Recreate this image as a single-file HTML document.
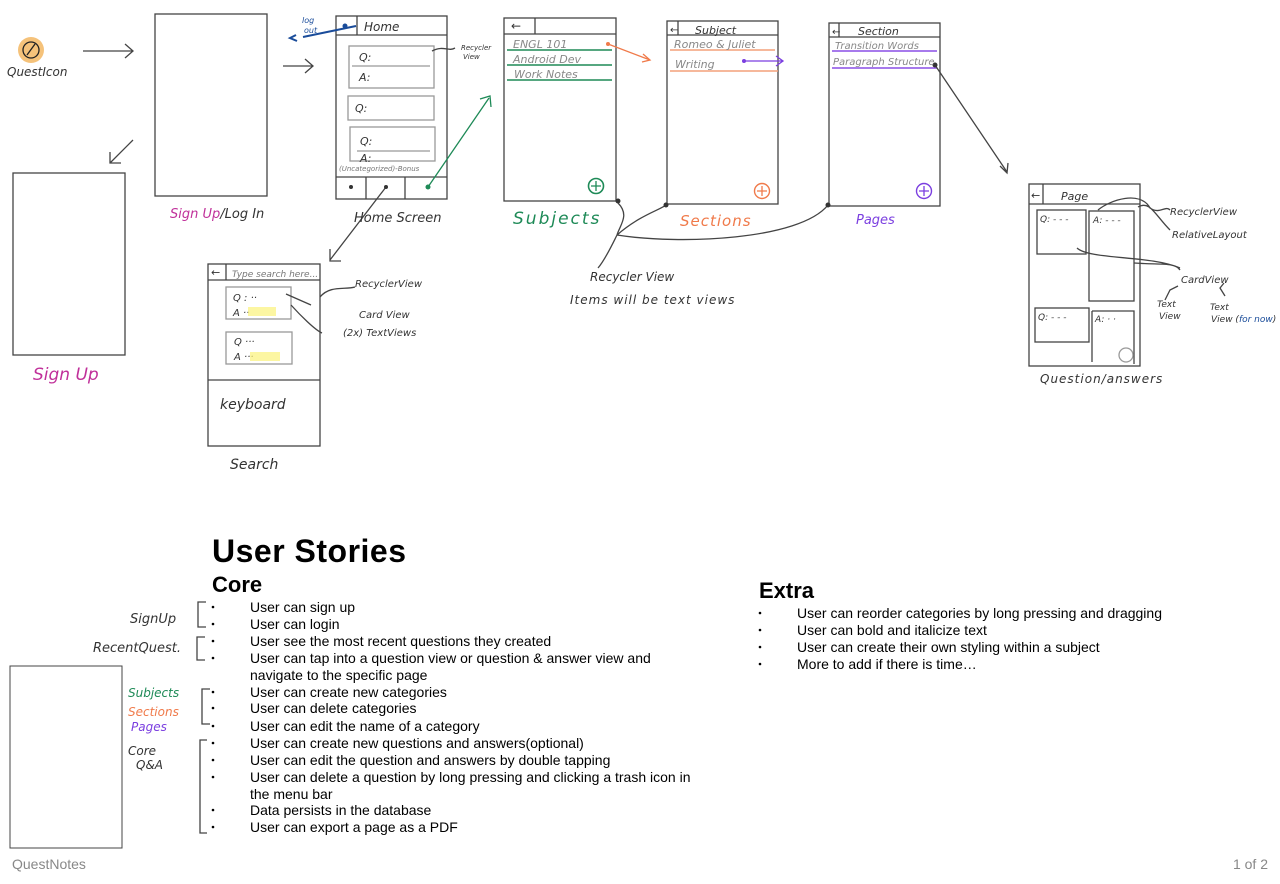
<!DOCTYPE html>
<html><head><meta charset="utf-8"><style>
html,body{margin:0;padding:0;background:#fff;width:1280px;height:884px;overflow:hidden}
svg{display:block}
.h{font-family:"Liberation Sans",sans-serif}
.s{font-family:"DejaVu Sans",sans-serif;font-style:italic}
</style></head><body>
<svg width="1280" height="884" viewBox="0 0 1280 884" xmlns="http://www.w3.org/2000/svg">
<g fill="none" stroke="#444" stroke-width="1.3">
<circle cx="31" cy="50" r="13" fill="#f5c27a" stroke="none"/>
<circle cx="31" cy="50" r="8" stroke="#222"/>
<line x1="27" y1="55" x2="35" y2="44" stroke="#222"/>
<path d="M83 51 H133 M125 44 L133 51 L125 58"/>
<rect x="155" y="14" width="112" height="182"/>
<path d="M283 66 H313 M305 59 L313 66 L305 73"/>
<path d="M133 140 L110 163 M110 152 V163 H121"/>
<rect x="13" y="173" width="112" height="182"/>
<rect x="336" y="16" width="111" height="183"/>
<path d="M336 35 H447 M357 16 V35"/>
<rect x="349" y="46" width="85" height="42" stroke="#999"/><path d="M352 66 H430" stroke="#999"/>
<rect x="348" y="96" width="86" height="24" stroke="#999"/>
<rect x="350" y="127" width="85" height="34" stroke="#999"/><path d="M357 151 H430" stroke="#999"/>
<path d="M336 177 H447 M366 177 V199 M405 177 V199"/>
<path d="M356 26 L303 37" stroke="#1a4c9a" stroke-width="2"/>
<path d="M296 35 L290 38 L297 41" stroke="#1a4c9a" stroke-width="2"/>
<path d="M386 187 L330 260 M330 249 V261 H341"/>
<path d="M428 187 L489 98 M480 99 L490 96 L491 107" stroke="#1e8a57"/>
<path d="M432 51 C444 45 448 52 455 48"/>
<rect x="504" y="18" width="112" height="183"/>
<path d="M504 34 H616 M535 18 V34"/>
<path d="M507 50 H612 M507 65 H612 M507 80 H612" stroke="#1e8a57" stroke-width="1.6"/>
<circle cx="596" cy="186" r="7.5" stroke="#1e8a57" stroke-width="1.6"/><path d="M596 181 V191 M591 186 H601" stroke="#1e8a57"/>
<path d="M608 44 L650 60 M643 54 L650 60 L642 62" stroke="#f07a4a"/>
<rect x="667" y="21" width="111" height="183"/>
<path d="M667 35 H778 M678 21 V35"/>
<path d="M670 50 H775 M670 71 H778" stroke="#f4a07a" stroke-width="1.6"/>
<circle cx="762" cy="191" r="7.5" stroke="#f07a4a" stroke-width="1.4"/><path d="M762 186 V196 M757 191 H767" stroke="#f07a4a"/>
<path d="M744 61 H782 M776 56 L783 61 L776 66" stroke="#7b3fe0"/>
<rect x="829" y="23" width="111" height="183"/>
<path d="M829 37 H940 M839 23 V37"/>
<path d="M832 51 H937 M832 68 H937" stroke="#8a4ee6" stroke-width="1.6"/>
<circle cx="924" cy="191" r="7.5" stroke="#7b3fe0" stroke-width="1.4"/><path d="M924 186 V196 M919 191 H929" stroke="#7b3fe0"/>
<path d="M935 65 L1007 172 M1000 166 L1007 173 L1008 163"/>
<path d="M618 203 C630 215 620 225 617 235 C612 245 605 260 598 268 M617 235 C640 215 660 210 666 205 M617 235 C680 245 800 240 828 205"/>
<rect x="1029" y="184" width="111" height="182"/>
<path d="M1029 204 H1140 M1043 184 V204"/>
<rect x="1037" y="210" width="49" height="44"/>
<rect x="1089" y="211" width="45" height="90"/>
<rect x="1035" y="308" width="54" height="34"/>
<path d="M1092 311 H1134 V364 M1092 311 V362"/>
<circle cx="1126" cy="355" r="7" stroke="#999"/>
<path d="M1098 210 C1110 200 1140 190 1150 208 C1160 215 1165 205 1170 210 M1138 207 C1150 200 1155 215 1170 230"/>
<path d="M1077 248 C1090 260 1150 255 1180 268 M1134 263 C1160 265 1175 262 1180 270"/>
<path d="M1165 300 L1170 290 L1178 286 M1225 296 L1220 288 L1224 283"/>
<rect x="208" y="264" width="112" height="182"/>
<path d="M208 280 H320 M226 264 V280 M208 380 H320"/>
<rect x="226" y="287" width="65" height="32" stroke="#999"/>
<rect x="226" y="332" width="66" height="32" stroke="#999"/>
<path d="M286 294 L311 305 M291 305 C300 315 315 330 322 333 M320 297 C330 285 345 290 355 287"/>
<path d="M206 602 H198 V627 H206 M205 637 H197 V660 H205 M210 689 H202 V724 H210 M207 740 H200 V833 H207"/>
<rect x="10" y="666" width="112" height="182" stroke-width="1"/>
</g>
<g fill="#333">
<circle cx="345" cy="26" r="2.5" fill="#1a4c9a"/><circle cx="351" cy="187" r="2"/><circle cx="386" cy="187" r="2"/><circle cx="428" cy="187" r="2.5" fill="#1e8a57"/>
<circle cx="608" cy="44" r="2" fill="#f07a4a"/><circle cx="744" cy="61" r="2" fill="#7b3fe0"/><circle cx="935" cy="65" r="2.5"/>
<circle cx="618" cy="201" r="2.5"/><circle cx="666" cy="205" r="2.5"/><circle cx="828" cy="205" r="2.5"/>
</g>
<g class="s" font-size="11" fill="#333">
<text x="7" y="76" font-size="12">QuestIcon</text>
<text x="170" y="218" font-size="13" fill="#c0309a">Sign Up<tspan fill="#333">/Log In</tspan></text>
<text x="33" y="380" font-size="17" fill="#c0309a">Sign Up</text>
<text x="364" y="31" font-size="12">Home</text>
<text x="359" y="61">Q:</text><text x="359" y="81">A:</text><text x="355" y="112">Q:</text>
<text x="360" y="145">Q:</text><text x="360" y="162">A:</text>
<text x="339" y="171" font-size="7" fill="#777">(Uncategorized)-Bonus</text>
<text x="354" y="222" font-size="13">Home Screen</text>
<text x="302" y="23" font-size="8" fill="#1a4c9a">log</text><text x="304" y="33" font-size="8" fill="#1a4c9a">out</text>
<text x="461" y="50" font-size="7">Recycler</text><text x="463" y="59" font-size="7">View</text>
<text x="511" y="30" font-size="12">←</text>
<text x="513" y="48" fill="#888">ENGL 101</text><text x="513" y="63" fill="#888">Android Dev</text><text x="514" y="78" fill="#888">Work Notes</text>
<text x="513" y="224" font-size="17" fill="#1e8a57" letter-spacing="2">Subjects</text>
<text x="670" y="33" font-size="10">←</text><text x="695" y="34" font-size="11">Subject</text>
<text x="674" y="48" fill="#888">Romeo &amp; Juliet</text><text x="675" y="68" fill="#888">Writing</text>
<text x="680" y="226" font-size="15" fill="#f07a4a" letter-spacing="1">Sections</text>
<text x="832" y="35" font-size="10">←</text><text x="858" y="35" font-size="11">Section</text>
<text x="835" y="49" fill="#888" font-size="10">Transition Words</text><text x="833" y="65" fill="#888" font-size="10">Paragraph Structure</text>
<text x="856" y="224" font-size="13" fill="#7b3fe0">Pages</text>
<text x="1031" y="199" font-size="11">←</text><text x="1061" y="200" font-size="11">Page</text>
<text x="1040" y="222" font-size="9">Q: - - -</text><text x="1093" y="223" font-size="9">A: - - -</text>
<text x="1038" y="320" font-size="9">Q: - - -</text><text x="1095" y="322" font-size="9">A: · ·</text>
<text x="1170" y="215" font-size="10">RecyclerView</text><text x="1172" y="238" font-size="10">RelativeLayout</text>
<text x="1181" y="283" font-size="10">CardView</text>
<text x="1157" y="307" font-size="9">Text</text><text x="1159" y="319" font-size="9">View</text>
<text x="1210" y="310" font-size="9">Text</text><text x="1211" y="322" font-size="9">View (<tspan fill="#1a4c9a">for now</tspan>)</text>
<text x="1040" y="383" font-size="12" letter-spacing="1">Question/answers</text>
<text x="590" y="281" font-size="12">Recycler View</text>
<text x="570" y="304" font-size="12" letter-spacing="1">Items will be text views</text>
<text x="211" y="276" font-size="11">←</text><text x="232" y="277" font-size="9" fill="#777">Type search here...</text>
<text x="233" y="301" font-size="10">Q : ··</text><text x="233" y="316" font-size="10">A ··</text>
<text x="234" y="345" font-size="10">Q ···</text><text x="234" y="360" font-size="10">A ···</text>
<rect x="248" y="307" width="28" height="9" fill="#fbf27a" opacity=".7"/><rect x="250" y="352" width="30" height="9" fill="#fbf27a" opacity=".7"/>
<text x="355" y="287" font-size="10">RecyclerView</text><text x="359" y="318" font-size="10">Card View</text><text x="343" y="336" font-size="10">(2x) TextViews</text>
<text x="220" y="409" font-size="14">keyboard</text>
<text x="230" y="469" font-size="14">Search</text>
<text x="130" y="623" font-size="13">SignUp</text>
<text x="93" y="652" font-size="13">RecentQuest.</text>
<text x="128" y="697" font-size="12" fill="#1e8a57">Subjects</text>
<text x="128" y="716" font-size="12" fill="#f07a4a">Sections</text>
<text x="131" y="731" font-size="12" fill="#7b3fe0">Pages</text>
<text x="128" y="755" font-size="12">Core</text><text x="136" y="769" font-size="12">Q&amp;A</text>
</g>
<g class="h" fill="#000">
<text x="212" y="562" font-size="32" font-weight="bold" textLength="194">User Stories</text>
<text x="212" y="592" font-size="22" font-weight="bold">Core</text>
<text x="759" y="598" font-size="22" font-weight="bold">Extra</text>
<g font-size="14">
<text x="250" y="612">User can sign up</text>
<text x="250" y="629">User can login</text>
<text x="250" y="646">User see the most recent questions they created</text>
<text x="250" y="663">User can tap into a question view or question &amp; answer view and</text>
<text x="250" y="680">navigate to the specific page</text>
<text x="250" y="697">User can create new categories</text>
<text x="250" y="713">User can delete categories</text>
<text x="250" y="731">User can edit the name of a category</text>
<text x="250" y="748">User can create new questions and answers(optional)</text>
<text x="250" y="765">User can edit the question and answers by double tapping</text>
<text x="250" y="782">User can delete a question by long pressing and clicking a trash icon in</text>
<text x="250" y="799">the menu bar</text>
<text x="250" y="815">Data persists in the database</text>
<text x="250" y="832">User can export a page as a PDF</text>
<text x="797" y="618">User can reorder categories by long pressing and dragging</text>
<text x="797" y="635">User can bold and italicize text</text>
<text x="797" y="652">User can create their own styling within a subject</text>
<text x="797" y="669">More to add if there is time…</text>
</g>
<g>
<circle cx="213" cy="607" r="1.3"/><circle cx="213" cy="624" r="1.3"/><circle cx="213" cy="641" r="1.3"/><circle cx="213" cy="658" r="1.3"/><circle cx="213" cy="692" r="1.3"/><circle cx="213" cy="708" r="1.3"/><circle cx="213" cy="726" r="1.3"/><circle cx="213" cy="743" r="1.3"/><circle cx="213" cy="760" r="1.3"/><circle cx="213" cy="777" r="1.3"/><circle cx="213" cy="810" r="1.3"/><circle cx="213" cy="827" r="1.3"/>
<circle cx="760" cy="613" r="1.3"/><circle cx="760" cy="630" r="1.3"/><circle cx="760" cy="647" r="1.3"/><circle cx="760" cy="664" r="1.3"/>
</g>
<text x="12" y="869" font-size="14" fill="#888">QuestNotes</text>
<text x="1268" y="869" font-size="14" fill="#888" text-anchor="end">1 of 2</text>
</g>
</svg>
</body></html>
